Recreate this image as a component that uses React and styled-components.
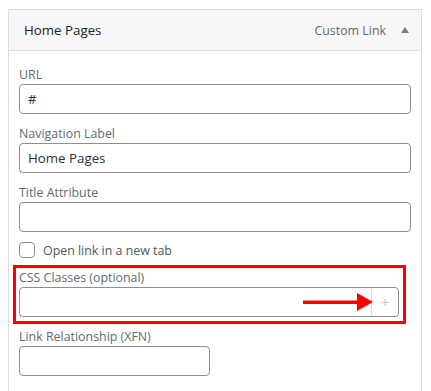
import React from 'react';
import styled, { createGlobalStyle } from 'styled-components';

const GlobalStyle = createGlobalStyle`
  body {
    margin: 0;
    background: #fff;
    font-family: "Open Sans", "Noto Sans", sans-serif;
    font-size: 12.4px;
    color: #2c3338;
  }
`;

const Panel = styled.div`
  margin: 9px 0 0 8px;
  width: 412px;
  border: 1px solid #dcdcde;
  border-bottom: none;
  background: #fff;
`;

const Header = styled.div`
  height: 40px;
  display: flex;
  align-items: center;
  padding: 0 12px 0 15px;
  background: #f6f7f7;
  border-bottom: 1px solid #dcdcde;
`;

const Title = styled.div`
  flex: 1;
  font-size: 13.3px;
  color: #1d2327;
`;

const ItemType = styled.span`
  color: #646970;
  margin-right: 15px;
`;

const Toggle = styled.span`
  width: 0;
  height: 0;
  border-left: 4px solid transparent;
  border-right: 4px solid transparent;
  border-bottom: 6px solid #787c82;
`;

const Body = styled.div`
  padding: 15px 10px 20px;
`;

const Field = styled.div`
  margin-bottom: ${p => p.$gap ?? 11}px;
`;

const Label = styled.label`
  display: block;
  line-height: 18px;
  color: #646970;
`;

const InputWrap = styled.div`
  position: relative;
  width: ${p => p.$width || '100%'};
  height: 30px;
  box-sizing: border-box;
  border: 1px solid #8c8f94;
  border-radius: 4px;
  background: #fff;
  display: flex;
  align-items: center;
`;

const TextInput = styled.input`
  flex: 1;
  min-width: 0;
  height: 100%;
  border: none;
  outline: none;
  background: transparent;
  padding: 0 8px;
  font: inherit;
  font-size: 13.3px;
  color: #2c3338;
`;

const AddButton = styled.span`
  width: 26px;
  align-self: stretch;
  border-left: 1px solid #dcdcde;
  display: flex;
  align-items: center;
  justify-content: center;
  color: #c3c4c7;
  font-size: 15px;
`;

const Arrow = styled.svg`
  position: absolute;
  left: 283px;
  top: 5px;
`;

const CheckRow = styled.label`
  display: flex;
  align-items: center;
  gap: 8px;
  height: 16px;
  margin-bottom: 7px;
  color: #50575e;
`;

const Box = styled.span`
  width: 16px;
  height: 16px;
  box-sizing: border-box;
  border: 1px solid #8c8f94;
  border-radius: 4px;
`;

const Highlight = styled.div`
  border: 3px solid #ff0000;
  padding: 1px 4px 4px 3px;
  margin: 0 5px 4px -6px;
`;

export default function App() {
  return (
    <>
      <GlobalStyle />
      <Panel>
        <Header>
          <Title>Home Pages</Title>
          <ItemType>Custom Link</ItemType>
          <Toggle />
        </Header>
        <Body>
          <Field>
            <Label>URL</Label>
            <InputWrap><TextInput defaultValue="#" /></InputWrap>
          </Field>
          <Field>
            <Label>Navigation Label</Label>
            <InputWrap><TextInput defaultValue="Home Pages" /></InputWrap>
          </Field>
          <Field $gap={10}>
            <Label>Title Attribute</Label>
            <InputWrap><TextInput /></InputWrap>
          </Field>
          <CheckRow>
            <Box />
            Open link in a new tab
          </CheckRow>
          <Highlight>
            <Label>CSS Classes (optional)</Label>
            <InputWrap>
              <TextInput />
              <AddButton>+</AddButton>
              <Arrow width="70" height="18" viewBox="0 0 70 18">
                <rect x="0" y="7.5" width="56" height="3.5" fill="#ff0000" />
                <polygon points="54,0 70,9 54,18" fill="#ff0000" />
              </Arrow>
            </InputWrap>
          </Highlight>
          <Field $gap={0}>
            <Label>Link Relationship (XFN)</Label>
            <InputWrap $width="191px"><TextInput /></InputWrap>
          </Field>
        </Body>
      </Panel>
    </>
  );
}
